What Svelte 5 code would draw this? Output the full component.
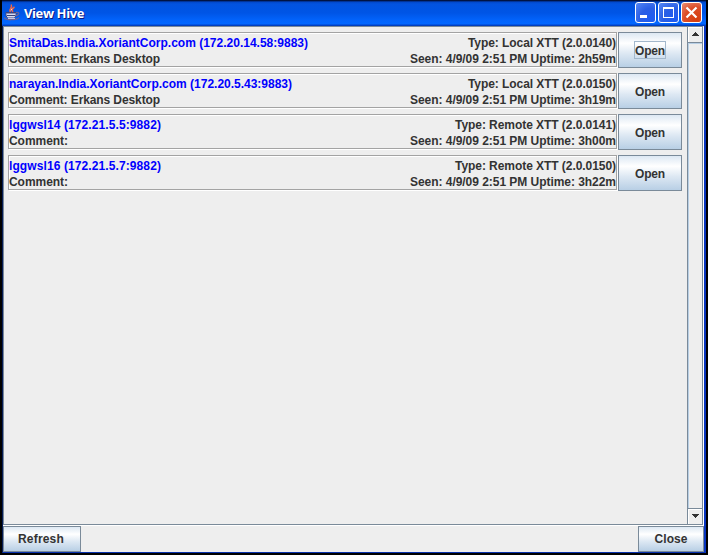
<script>
  const hosts = [
    { name: 'SmitaDas.India.XoriantCorp.com (172.20.14.58:9883)', nw: 299, comment: 'Comment: Erkans Desktop', cw: 151, type: 'Type: Local XTT (2.0.0140)', tw: 148, seen: 'Seen: 4/9/09 2:51 PM Uptime: 2h59m' },
    { name: 'narayan.India.XoriantCorp.com (172.20.5.43:9883)', nw: 283, comment: 'Comment: Erkans Desktop', cw: 151, type: 'Type: Local XTT (2.0.0150)', tw: 148, seen: 'Seen: 4/9/09 2:51 PM Uptime: 3h19m' },
    { name: 'lggwsl14 (172.21.5.5:9882)', nw: 152, comment: 'Comment:', cw: 59, type: 'Type: Remote XTT (2.0.0141)', tw: 161, seen: 'Seen: 4/9/09 2:51 PM Uptime: 3h00m' },
    { name: 'lggwsl16 (172.21.5.7:9882)', nw: 152, comment: 'Comment:', cw: 59, type: 'Type: Remote XTT (2.0.0150)', tw: 161, seen: 'Seen: 4/9/09 2:51 PM Uptime: 3h22m' }
  ];

  // Spreads a label over its fixed advance width.
  function fit(node, width) {
    const natural = node.getBoundingClientRect().width;
    const gap = (width - natural) / node.textContent.length;
    node.style.letterSpacing = `${gap}px`;
  }
</script>

<div class="window">
  <header>
    <svg class="cup" width="17" height="17" viewBox="0 0 17 17" fill="none">
      <path d="M6.5 8C4 5.5 9 4.2 7.2.5M9 8C7.2 6 8.5 4.2 10.5 3" stroke="#ee6545" stroke-width="1.5" />
      <path d="M7 6.5L8 4.5" stroke="#ffd2b8" />
      <path d="M2 8.5h10v2c0 2-1.3 3.5-2.5 3.5h-5C3 14 2 12.5 2 10.5Z" fill="#d6dcf2" stroke="#44447c" />
      <path d="M2.5 9h9M3 11.5h8" stroke="#39417c" />
      <path d="M12 8.5c4-1 3.5 2.8-.8 3.3M.5 13.5c0 3 12.5 3 14.5-.2" stroke="#6a6296" stroke-width="1.3" />
      <path d="M4 14.5h7" stroke="#c4c8e4" />
    </svg>
    <h1><span use:fit={60}>View Hive</span></h1>
    <div class="controls">
      <span class="ctl"><svg width="21" height="21"><path d="M5 13h7v3H5z" fill="#fff" /></svg></span>
      <span class="ctl"><svg width="21" height="21"><path d="M5 5h11v11H5zM6 7v8h9V7z" fill="#fff" fill-rule="evenodd" /></svg></span>
      <span class="ctl close"><svg width="21" height="21"><path d="M5.5 5.5l10 10m0-10l-10 10" stroke="#fff" stroke-width="2.2" /></svg></span>
    </div>
  </header>

  <div class="content">
    <main>
      <div class="list">
        {#each hosts as host, i}
          <div class="row">
            <div class="info">
              <div class="line"><span class="name" use:fit={host.nw}>{host.name}</span><span use:fit={host.tw}>{host.type}</span></div>
              <div class="line"><span use:fit={host.cw}>{host.comment}</span><span use:fit={206}>{host.seen}</span></div>
            </div>
            <button class="open" class:focused={i === 0}><span use:fit={30}>Open</span></button>
          </div>
        {/each}
      </div>
      <div class="scrollbar">
        <div class="arrow up"><svg width="9" height="5" shape-rendering="crispEdges"><path d="M4 0h1v1h1v1h1v1h1v1H1V3h1V2h1V1h1z" fill="#333" /></svg></div>
        <div class="track"></div>
        <div class="arrow down"><svg width="9" height="5" shape-rendering="crispEdges"><path d="M1 0h7v1H7v1H6v1H5v1H4V3H3V2H2V1H1z" fill="#333" /></svg></div>
      </div>
    </main>

    <footer>
      <button class="refresh"><span use:fit={46}>Refresh</span></button>
      <button class="dismiss"><span use:fit={33}>Close</span></button>
    </footer>
  </div>
</div>

<style>
  :global(body) { margin: 0; background: #000; }
  .window {
    box-sizing: border-box;
    width: 708px;
    height: 555px;
    padding: 0 2px 2px;
    background: #000;
    display: flex;
    flex-direction: column;
    font: bold 12px/16px "Liberation Sans", Arial, sans-serif;
    color: #333;
    overflow: hidden;
  }
  span { white-space: pre; }
  header {
    box-sizing: border-box;
    height: 26px;
    flex: none;
    display: flex;
    align-items: flex-start;
    padding: 0 4px 0 2px;
    background: linear-gradient(#00071c 0, #001f69 1px, #0148c9 2px, #0353df 4px, #0054e3 9px, #0055e6 13px, #0263fb 20px, #0267ff 24px, #0144c8 25px, #0239b5 26px);
  }
  .cup { margin-top: 4px; flex: none; }
  h1 {
    margin: 5px 0 0 3px;
    font: bold 13px/17px "Open Sans", "Noto Sans", sans-serif;
    color: #fff;
    text-shadow: 1px 1px #0a1883;
  }
  .controls { display: flex; gap: 2px; margin: 2px 0 0 auto; }
  .ctl {
    box-sizing: border-box;
    width: 21px;
    height: 21px;
    border: 1px solid #fff;
    border-radius: 3px;
    background: radial-gradient(circle at 80% 85%, #1f5cf0 10%, #2a5ee4 50%, #5284f4 95%);
  }
  .ctl svg { display: block; margin: -1px; }
  .close { background: radial-gradient(circle at 75% 85%, #d63f10, #dc4d28 55%, #ec9078 100%); }
  .content {
    flex: 1;
    min-height: 0;
    display: flex;
    flex-direction: column;
    border-left: 1px solid #061c55;
    border-right: 2px solid #0835bf;
    border-bottom: 1px solid #0831ad;
    background: #eee;
  }
  main {
    flex: 1;
    min-height: 0;
    display: flex;
    margin-right: 1px;
    border: 1px solid #7a8a99;
    box-shadow: 1px 1px #fff;
  }
  .list {
    flex: 1;
    display: flex;
    flex-direction: column;
    gap: 5px;
    padding: 5px 5px 0 4px;
  }
  .row { display: flex; height: 36px; }
  .info {
    box-sizing: border-box;
    width: 609px;
    height: 35px;
    margin-right: 1px;
    border: 1px solid #a3a3a3;
    box-shadow: inset 1px 1px #fff, 1px 1px #fff;
    padding-top: 2px;
  }
  .line { display: flex; justify-content: space-between; height: 16px; }
  .name { color: #00f; }
  button {
    box-sizing: border-box;
    display: flex;
    justify-content: center;
    align-items: center;
    padding: 0;
    border: 1px solid #7a8a99;
    border-radius: 0;
    background: linear-gradient(#dde8f3 0, #fff 30%, #dde8f3 60%, #b8cfe5 100%);
    color: #333;
    font: inherit;
  }
  .open { width: 64px; height: 36px; }
  .open span { height: 16px; line-height: 18px; }
  .focused span { outline: 1px solid #a3b8cc; }
  .scrollbar {
    box-sizing: border-box;
    width: 15px;
    border-left: 1px solid #7a8a99;
    display: flex;
    flex-direction: column;
  }
  .arrow {
    box-sizing: border-box;
    height: 16px;
    flex: none;
    display: flex;
    align-items: center;
    justify-content: center;
    box-shadow: inset 1px 1px #fff;
  }
  .up { border-bottom: 1px solid #7a8a99; }
  .down { border-top: 1px solid #7a8a99; }
  .track { flex: 1; border-left: 1px solid #b8cfe5; border-top: 1px solid #b8cfe5; }
  footer {
    box-sizing: border-box;
    height: 27px;
    flex: none;
    display: flex;
    justify-content: space-between;
    border-top: 1px solid #fff;
  }
  .refresh { width: 78px; padding-right: 2px; }
  .dismiss { width: 66px; }
</style>
